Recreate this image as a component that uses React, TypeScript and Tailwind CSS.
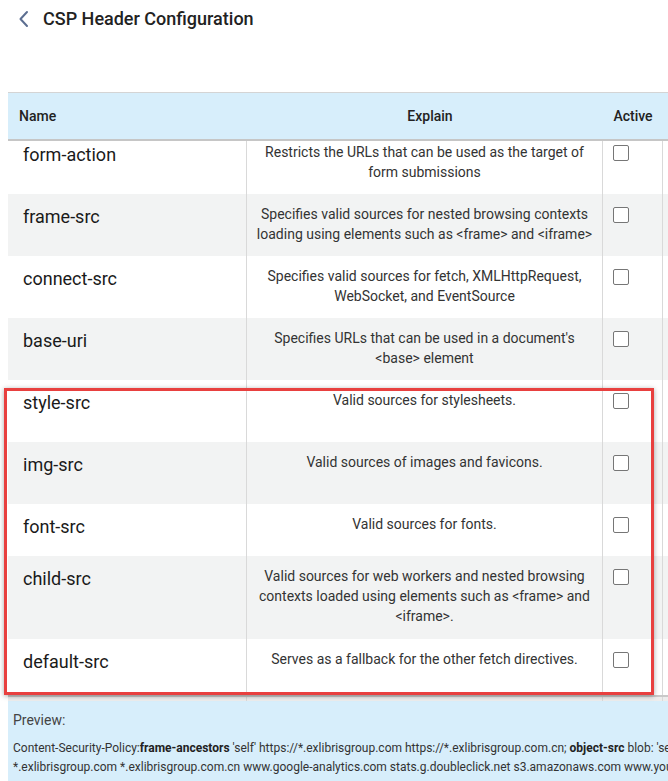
import React from 'react';

type Row = {
  name: string;
  explain: string[];
  h: number;
};

const rows: Row[] = [
  { name: 'form-action', explain: ['Restricts the URLs that can be used as the target of', 'form submissions'], h: 62 },
  { name: 'frame-src', explain: ['Specifies valid sources for nested browsing contexts', 'loading using elements such as <frame> and <iframe>'], h: 62 },
  { name: 'connect-src', explain: ['Specifies valid sources for fetch, XMLHttpRequest,', 'WebSocket, and EventSource'], h: 62 },
  { name: 'base-uri', explain: ["Specifies URLs that can be used in a document's", '<base> element'], h: 62 },
  { name: 'style-src', explain: ['Valid sources for stylesheets.'], h: 62 },
  { name: 'img-src', explain: ['Valid sources of images and favicons.'], h: 62 },
  { name: 'font-src', explain: ['Valid sources for fonts.'], h: 52 },
  { name: 'child-src', explain: ['Valid sources for web workers and nested browsing', 'contexts loaded using elements such as <frame> and', '<iframe>.'], h: 83 },
  { name: 'default-src', explain: ['Serves as a fallback for the other fetch directives.'], h: 62 },
];

function Checkbox() {
  return <div className="w-[16px] h-[16px] border border-[#767676] rounded-[2px] bg-white" />;
}

export default function App() {
  return (
    <div
      className="relative w-[668px] h-[781px] overflow-hidden bg-white text-[#212121]"
      style={{ fontFamily: 'Roboto, "Liberation Sans", sans-serif' }}
    >
      {/* title bar */}
      <div className="flex items-center h-[37px] pl-[18px]">
        <svg width="12" height="18" viewBox="0 0 12 18" className="mt-[1px]">
          <path d="M9 2 L2.5 9 L9 16" fill="none" stroke="#5c6e91" strokeWidth="2" strokeLinecap="round" strokeLinejoin="round" />
        </svg>
        <h1 className="ml-[13px] text-[18px] font-medium text-[#222]">CSP Header Configuration</h1>
      </div>

      <div className="h-[55px]" />

      {/* table */}
      <div className="ml-[8px] w-[760px] border-t border-[#d4d4d4]">
        <div className="grid grid-cols-[239px_356px_60px_1fr] h-[48px] bg-[#d7eefb] border-b-2 border-[#c6c6c6] text-[14px] font-medium text-[#222] items-center">
          <div className="pl-[11px]">Name</div>
          <div className="text-center pl-[10px]">Explain</div>
          <div className="text-center">Active</div>
          <div />
        </div>

        {/* scrolled body */}
        <div className="h-[554px] overflow-hidden">
          <div className="-mt-[9px]">
            {rows.map((r, i) => (
              <div
                key={r.name}
                className={`grid grid-cols-[239px_356px_60px_1fr] ${i % 2 === 1 ? 'bg-[#f2f3f3]' : 'bg-white'}`}
                style={{ height: r.h }}
              >
                <div className="border-r border-[#d9d9d9] pl-[15px] pt-[11px] text-[18px] leading-[24px] text-[#1a1a1a]">
                  {r.name}
                </div>
                <div className="border-r border-[#d9d9d9] pt-[10px] text-[14px] leading-[20px] text-center text-[#333] overflow-hidden">
                  {r.explain.map((line) => (
                    <div key={line} className="whitespace-nowrap">{line}</div>
                  ))}
                </div>
                <div className="border-r border-[#d9d9d9] pl-[10px] pt-[13px]">
                  <Checkbox />
                </div>
                <div />
              </div>
            ))}
          </div>
        </div>

        <div className="grid grid-cols-[239px_356px_60px_1fr] h-[6px] border-t-2 border-[#c9c9c9] bg-[#ededed]">
          <div className="border-r border-[#d9d9d9]" />
          <div className="border-r border-[#d9d9d9]" />
          <div className="border-r border-[#d9d9d9]" />
          <div />
        </div>

        {/* preview */}
        <div className="bg-[#d7eefb] h-[80px] pl-[5px] pt-[10px]">
          <div className="text-[14px] leading-[18px] text-[#444]">Preview:</div>
          <div className="mt-[10px] text-[12px] leading-[19px] text-[#333] whitespace-nowrap">
            <div>
              Content-Security-Policy:<span className="font-bold text-[#222]">frame-ancestors</span> 'self' https://*.exlibrisgroup.com https://*.exlibrisgroup.com.cn; <span className="font-bold text-[#222]">object-src</span> blob: 'self'
            </div>
            <div>
              *.exlibrisgroup.com *.exlibrisgroup.com.cn www.google-analytics.com stats.g.doubleclick.net s3.amazonaws.com www.youtube.com
            </div>
          </div>
        </div>
      </div>

      {/* annotation highlight */}
      <div className="absolute left-[4px] top-[388px] w-[650px] h-[307px] border-[3px] border-[#e8403f] shadow-[0_1px_5px_rgba(0,0,0,0.35)] pointer-events-none" />
    </div>
  );
}
